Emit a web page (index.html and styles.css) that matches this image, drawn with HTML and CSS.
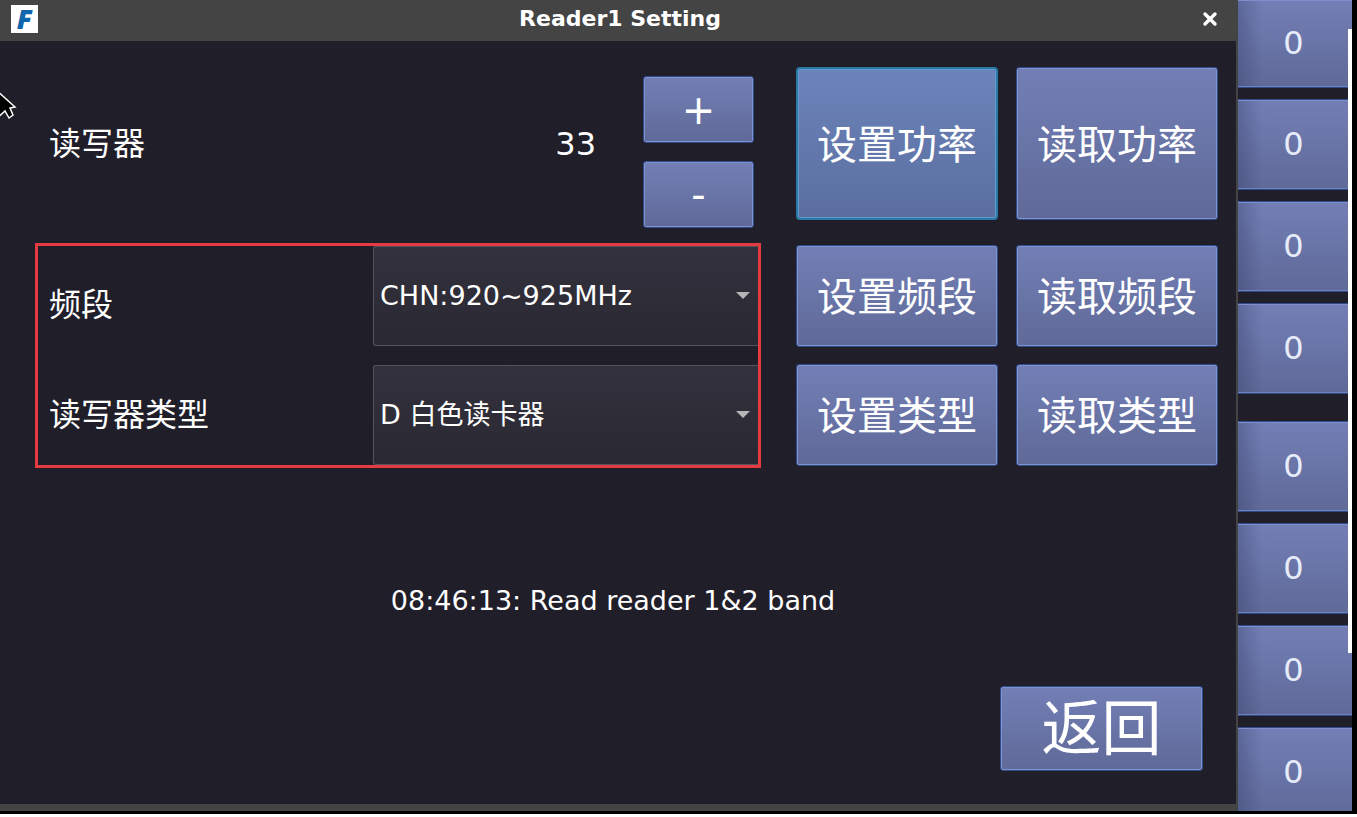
FILE: index.html
```
<!DOCTYPE html>
<html lang="zh-CN">
  <head>
    <meta charset="utf-8">
    <title>Reader1 Setting</title>
    <link rel="stylesheet" href="styles.css">
  </head>
  <body>
    <div class="screen">
      <main class="window">
        <header class="title-bar">
          <span class="logo">F</span>
          <h1 class="title">Reader1 Setting</h1>
          <button class="close" type="button" aria-label="关闭">
            <svg width="16" height="16" viewBox="0 0 16 16"><path d="M3 3l10 10M13 3L3 13" stroke="#fff" stroke-width="3.4" stroke-linecap="round"/></svg>
          </button>
        </header>

        <div class="content">
          <div class="settings">
            <div class="power">
              <label class="label" for="power">读写器</label>
              <output class="power-value" id="power">33</output>
              <div class="stepper">
                <button class="btn btn-step" type="button">+</button>
                <button class="btn btn-step" type="button">-</button>
              </div>
            </div>
            <div class="highlight">
              <div class="field field-band">
                <label class="label" for="band">频段</label>
                <div class="combo">
                  <select id="band"><option>CHN:920~925MHz</option></select>
                </div>
              </div>
              <div class="field">
                <label class="label" for="type">读写器类型</label>
                <div class="combo">
                  <select id="type"><option>D 白色读卡器</option></select>
                </div>
              </div>
            </div>
          </div>

          <div class="actions">
            <div class="action-row action-power">
              <button class="btn btn-active" type="button">设置功率</button>
              <button class="btn" type="button">读取功率</button>
            </div>
            <div class="action-row">
              <button class="btn" type="button">设置频段</button>
              <button class="btn" type="button">读取频段</button>
            </div>
            <div class="action-row">
              <button class="btn" type="button">设置类型</button>
              <button class="btn" type="button">读取类型</button>
            </div>
          </div>
        </div>

        <p class="status">08:46:13: Read reader 1&amp;2 band</p>

        <footer class="footer">
          <button class="btn btn-back" type="button">返回</button>
        </footer>
      </main>

      <!-- 后面主界面露出的计数按钮 -->
      <aside class="counters">
        <div class="counter-group">
          <button class="counter counter-first" type="button">0</button>
          <button class="counter" type="button">0</button>
          <button class="counter" type="button">0</button>
          <button class="counter" type="button">0</button>
        </div>
        <div class="counter-group">
          <button class="counter" type="button">0</button>
          <button class="counter" type="button">0</button>
          <button class="counter" type="button">0</button>
          <button class="counter" type="button">0</button>
        </div>
        <div class="scrollbar"></div>
      </aside>

      <svg class="cursor" width="18" height="30" viewBox="0 0 18 30"><path d="M-4 -2L15 15L10 16L13 23L9 26L5 19L-4 27Z" fill="#000" stroke="#fff" stroke-width="1.5"/></svg>
    </div>
  </body>
</html>
```

FILE: styles.css
```
*{
  box-sizing: border-box;
}
body{
  margin: 0;
  background: #fff;
  color: #fff;
  font-family: "DejaVu Sans", "Noto Sans CJK SC", sans-serif;
}
button, select{
  font-family: inherit;
  color: inherit;
}

.screen{
  position: relative;
  display: flex;
  height: calc(100vh - 3px);
  padding: 0 5px 3px 0;
  overflow: hidden;
  background: #000;
}

/**** 设置窗口 ****/
.window{
  flex: 1;
  display: flex;
  flex-direction: column;
  border-right: 2px solid #444;
  border-bottom: 7px solid #444;
  background: #201e29;
}
.title-bar{
  display: flex;
  align-items: center;
  height: 41px;
  padding: 0 18px 4px 11px;
  background: #444;
}
.logo{
  width: 27px;
  height: 28px;
  background: #fff;
  color: #0f66ad;
  font: italic 800 27px/28px "Open Sans", sans-serif;
  text-align: center;
}
.title{
  flex: 1;
  margin: 0;
  font-size: 22px;
  line-height: 24px;
  text-align: center;
}
.close{
  display: flex;
  padding: 0;
  border: 0;
  background: none;
}

.content{
  display: grid;
  grid-template-columns: 726fr 422fr;
  align-items: start;
  gap: 35px;
  padding: 26px 18px 0 35px;
}
.settings{
  padding-top: 9px;
}
.label{
  flex: 1;
  font-size: 32px;
  line-height: 40px;
}
.power{
  display: flex;
  align-items: center;
  padding: 0 7px 0 14px;
  margin-bottom: 15px;
}
.power .label, .power-value{
  padding-bottom: 17px;
}
.power-value{
  font-size: 32px;
  line-height: 40px;
}
.stepper{
  display: grid;
  gap: 18px;
  width: 111px;
  margin-left: 47px;
}

.highlight{
  display: grid;
  gap: 19px;
  padding-left: 11px;
  border: 3px solid #e33b40;
}
.field{
  display: flex;
  align-items: center;
}
.field-band .label{
  padding-top: 18px;
}
.combo{
  position: relative;
  width: 54.3%;
}
.combo select{
  display: block;
  width: 100%;
  height: 100px;
  padding: 0 32px 2px 6px;
  border: 1px solid #55535e;
  border-right: 0;
  border-radius: 3px 0 0 3px;
  background: linear-gradient(#33313d, #2a2832);
  font-size: 27px;
  appearance: none;
}
.combo::after{
  content: "";
  position: absolute;
  top: 46px;
  right: 8px;
  border: 7px solid transparent;
  border-top-color: #b5b5b8;
  border-bottom: 0;
  pointer-events: none;
}

/**** 按钮 ****/
.btn{
  padding: 0;
  border: 1px solid #304a8a;
  border-radius: 3px;
  background: linear-gradient(#737eb6, #5f6a98);
  box-shadow: inset 0 0 0 1px #7f93cf;
  font-size: 40px;
}
.btn-step{
  height: 67px;
}
.btn-active{
  border: 2px solid #2a7aa8;
  border-radius: 4px;
  background: linear-gradient(#6c84bb, #5a6e9f);
  box-shadow: inset 0 0 0 1px #649bcd;
}
.actions{
  display: grid;
  gap: 17px;
}
.action-row{
  display: grid;
  grid-template-columns: 1fr 1fr;
  gap: 18px;
  height: 102px;
}
.action-row .btn{
  padding-bottom: 4px;
}
.action-power{
  height: 153px;
  margin-bottom: 8px;
}

.status{
  margin: 115px 10px 0 0;
  font-size: 27px;
  line-height: 36px;
  text-align: center;
}
.footer{
  display: flex;
  justify-content: flex-end;
  margin-top: auto;
  padding: 0 33px 33px 0;
}
.btn-back{
  width: 203px;
  height: 85px;
  font-size: 60px;
  line-height: 72px;
}

/**** 右侧计数 ****/
.counters{
  position: relative;
  flex: 0 0 114px;
  overflow: hidden;
  background: #201e29;
}
.counter-group{
  display: grid;
  gap: 11px;
  margin-bottom: 27px;
}
.counter{
  height: 91px;
  padding: 0 3px 2px 0;
  border: 1px solid #304a8a;
  border-width: 1px 0;
  background:
    linear-gradient(90deg, rgba(40, 50, 90, .3), transparent 24px),
    linear-gradient(#737eb6, #5f6a98);
  box-shadow: inset 0 1px #7f8fcb, inset 0 -1px #6d80bb;
  color: #e8ecfa;
  font-size: 32px;
}
.counter-first{
  height: 88px;
  border-top: 0;
}
.scrollbar{
  position: absolute;
  top: 29px;
  right: 0;
  width: 4px;
  height: 624px;
  background: #fff;
}

.cursor{
  position: absolute;
  top: 92px;
  left: 0;
}
```
